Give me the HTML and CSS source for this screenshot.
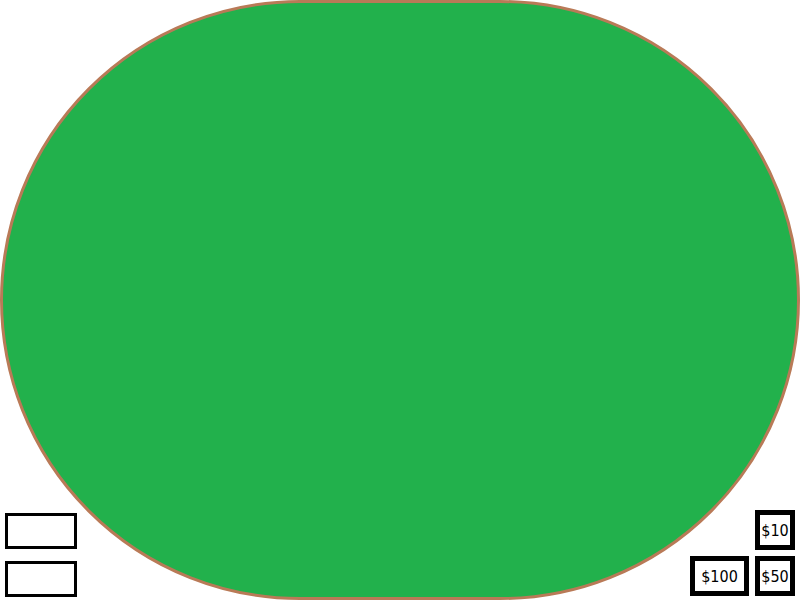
FILE: index.html
```html
<!DOCTYPE html>
<html lang="en">
<head>
    <meta charset="UTF-8">
    <meta name="viewport" content="width=device-width, initial-scale=1.0">
    <title>Poker Table</title>
    <link rel="stylesheet" href="styles.css">
</head>
<body>
    <div class="table"></div>

    <!-- player inputs -->
    <div class="inputs">
        <input type="text" class="field">
        <input type="text" class="field">
    </div>

    <!-- chips -->
    <div class="chips">
        <button class="chip chip-10">$10</button>
        <button class="chip chip-100">$100</button>
        <button class="chip chip-50">$50</button>
    </div>
</body>
</html>
```

FILE: styles.css
```css
body {
    margin: 0;
    width: 800px;
    height: 600px;
    overflow: hidden;
    position: relative;
    background-color: #fff;
    font-family: "DejaVu Sans", Verdana, sans-serif;
}
.table {
    box-sizing: border-box;
    width: 800px;
    height: 600px;
    border: 3px solid #b97a57;
    border-radius: 300px;
    background-color: #22b14c;
}
.inputs {
    position: absolute;
    left: 5px;
    bottom: 3px;
    display: flex;
    flex-direction: column;
    gap: 12px;
}
.field {
    box-sizing: border-box;
    width: 72px;
    height: 36px;
    margin: 0;
    padding: 0;
    border: 3px solid #000;
    background-color: #fff;
}
.chips {
    position: absolute;
    right: 5px;
    bottom: 4px;
    display: grid;
    grid-template-columns: auto auto;
    gap: 6px;
    justify-items: end;
}
.chip {
    box-sizing: border-box;
    height: 40px;
    min-width: 40px;
    margin: 0;
    padding: 0 1px;
    border: 5px solid #000;
    background-color: #fff;
    color: #000;
    font-family: "DejaVu Sans Condensed", "DejaVu Sans", sans-serif;
    font-size: 16px;
}
.chip-10 {
    grid-column: 2;
}
.chip-100 {
    width: 59px;
}
```
